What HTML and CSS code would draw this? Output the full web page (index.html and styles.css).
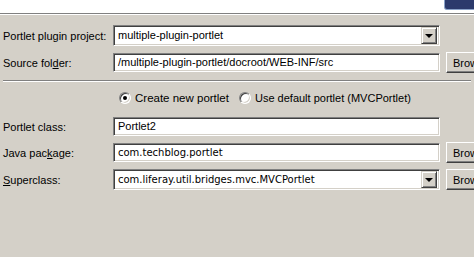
FILE: index.html
```html
<!DOCTYPE html>
<html lang="en">
<head>
<meta charset="UTF-8" />
<meta name="viewport" content="width=device-width, initial-scale=1" />
<title>New Liferay Portlet</title>
<link rel="stylesheet" href="styles.css">
</head>
<body>

<div class="banner">
  <div class="banner-logo"></div>
</div>
<div class="separator"></div>

<div class="form form-top">
  <div class="row">
    <label class="label">Portlet plugin project:</label>
    <div class="combo">
      <span class="combo-text">multiple-plugin-portlet</span>
      <span class="combo-arrow"></span>
    </div>
  </div>

  <div class="row">
    <label class="label">Source fol<u>d</u>er:</label>
    <div class="field">/multiple-plugin-portlet/docroot/WEB-INF/src</div>
    <button class="btn">Browse...</button>
  </div>
</div>

<div class="separator section"></div>

<div class="form">
  <div class="radios">
    <span class="radio checked"></span>
    <span class="radio-label first">Create new portlet</span>
    <span class="radio"></span>
    <span class="radio-label">Use default portlet (MVCPortlet)</span>
  </div>

  <div class="row">
    <label class="label">Portlet class:</label>
    <div class="field">Portlet2</div>
  </div>

  <div class="row">
    <label class="label">Java pac<u>k</u>age:</label>
    <div class="field mono">com.techblog.portlet</div>
    <button class="btn">Browse...</button>
  </div>

  <div class="row">
    <label class="label"><u>S</u>uperclass:</label>
    <div class="combo">
      <span class="combo-text mono">com.liferay.util.bridges.mvc.MVCPortlet</span>
      <span class="combo-arrow"></span>
    </div>
    <button class="btn">Browse...</button>
  </div>
</div>

</body>
</html>
```

FILE: styles.css
```css
body {
  margin: 0;
  width: 474px;
  height: 257px;
  overflow: hidden;
  background: #d4d0c8;
  font-family: 'Liberation Sans', Arial, sans-serif;
  font-size: 11px;
  color: #000;
}
.banner {
  background: #fff;
  height: 13px;
  display: flex;
  justify-content: flex-end;
}
.banner-logo {
  width: 32px;
  height: 10px;
  margin-right: -2px;
  background: #2c3a6c;
  border: 1px solid #8aa2c8;
  border-top: none;
  border-radius: 0 0 0 3px;
  box-sizing: border-box;
}
.separator {
  border-top: 1px solid #808080;
  border-bottom: 1px solid #fff;
}
.separator.section {
  margin: 0 3px;
}
.form {
  padding: 0 3px;
}
.form-top {
  padding-top: 10px;
  padding-bottom: 1px;
}
.row {
  display: grid;
  grid-template-columns: 110px 327px auto;
  align-items: center;
  margin-bottom: 6px;
}
.label {
  white-space: nowrap;
}
.field, .combo {
  box-sizing: border-box;
  height: 19px;
  background: #fff;
  border: 1px solid;
  border-color: #808080 #fff #fff #808080;
  box-shadow: inset 1px 1px #404040, inset -1px -1px #d4d0c8;
  padding: 0 4px;
  line-height: 17px;
  white-space: nowrap;
  overflow: hidden;
}
.combo {
  height: 21px;
  display: flex;
  align-items: center;
  padding: 0 2px 0 4px;
}
.combo-text {
  flex: 1;
  line-height: 19px;
}
.combo-arrow {
  width: 16px;
  height: 17px;
  box-sizing: border-box;
  background: #d4d0c8;
  border: 1px solid;
  border-color: #d4d0c8 #404040 #404040 #d4d0c8;
  box-shadow: inset 1px 1px #fff, inset -1px -1px #808080;
  display: flex;
  align-items: center;
  justify-content: center;
}
.combo-arrow::after {
  content: "";
  border-left: 4px solid transparent;
  border-right: 4px solid transparent;
  border-top: 4px solid #000;
}
.mono {
  font-family: 'DejaVu Sans', Verdana, sans-serif;
  font-size: 10px;
}
.btn {
  box-sizing: border-box;
  height: 21px;
  margin-left: 6px;
  font-family: inherit;
  font-size: 11px;
  text-align: left;
  padding: 0 0 0 6px;
  background: #d4d0c8;
  border: 1px solid;
  border-color: #fff #404040 #404040 #fff;
  box-shadow: inset -1px -1px #808080;
  white-space: nowrap;
}
.radios {
  display: flex;
  align-items: center;
  padding-left: 116px;
  height: 20px;
  margin: 6px 0 9px;
}
.radio {
  width: 12px;
  height: 12px;
  box-sizing: border-box;
  border-radius: 50%;
  background: #fff;
  border: 1px solid;
  border-color: #808080 #fff #fff #808080;
  box-shadow: inset 1px 1px #404040, inset -1px -1px #d4d0c8;
  display: flex;
  align-items: center;
  justify-content: center;
  margin-right: 4px;
}
.radio.checked::after {
  content: "";
  width: 4px;
  height: 4px;
  border-radius: 50%;
  background: #000;
}
.radio-label.first {
  font-size: 11.5px;
  margin-right: 10px;
}
```
